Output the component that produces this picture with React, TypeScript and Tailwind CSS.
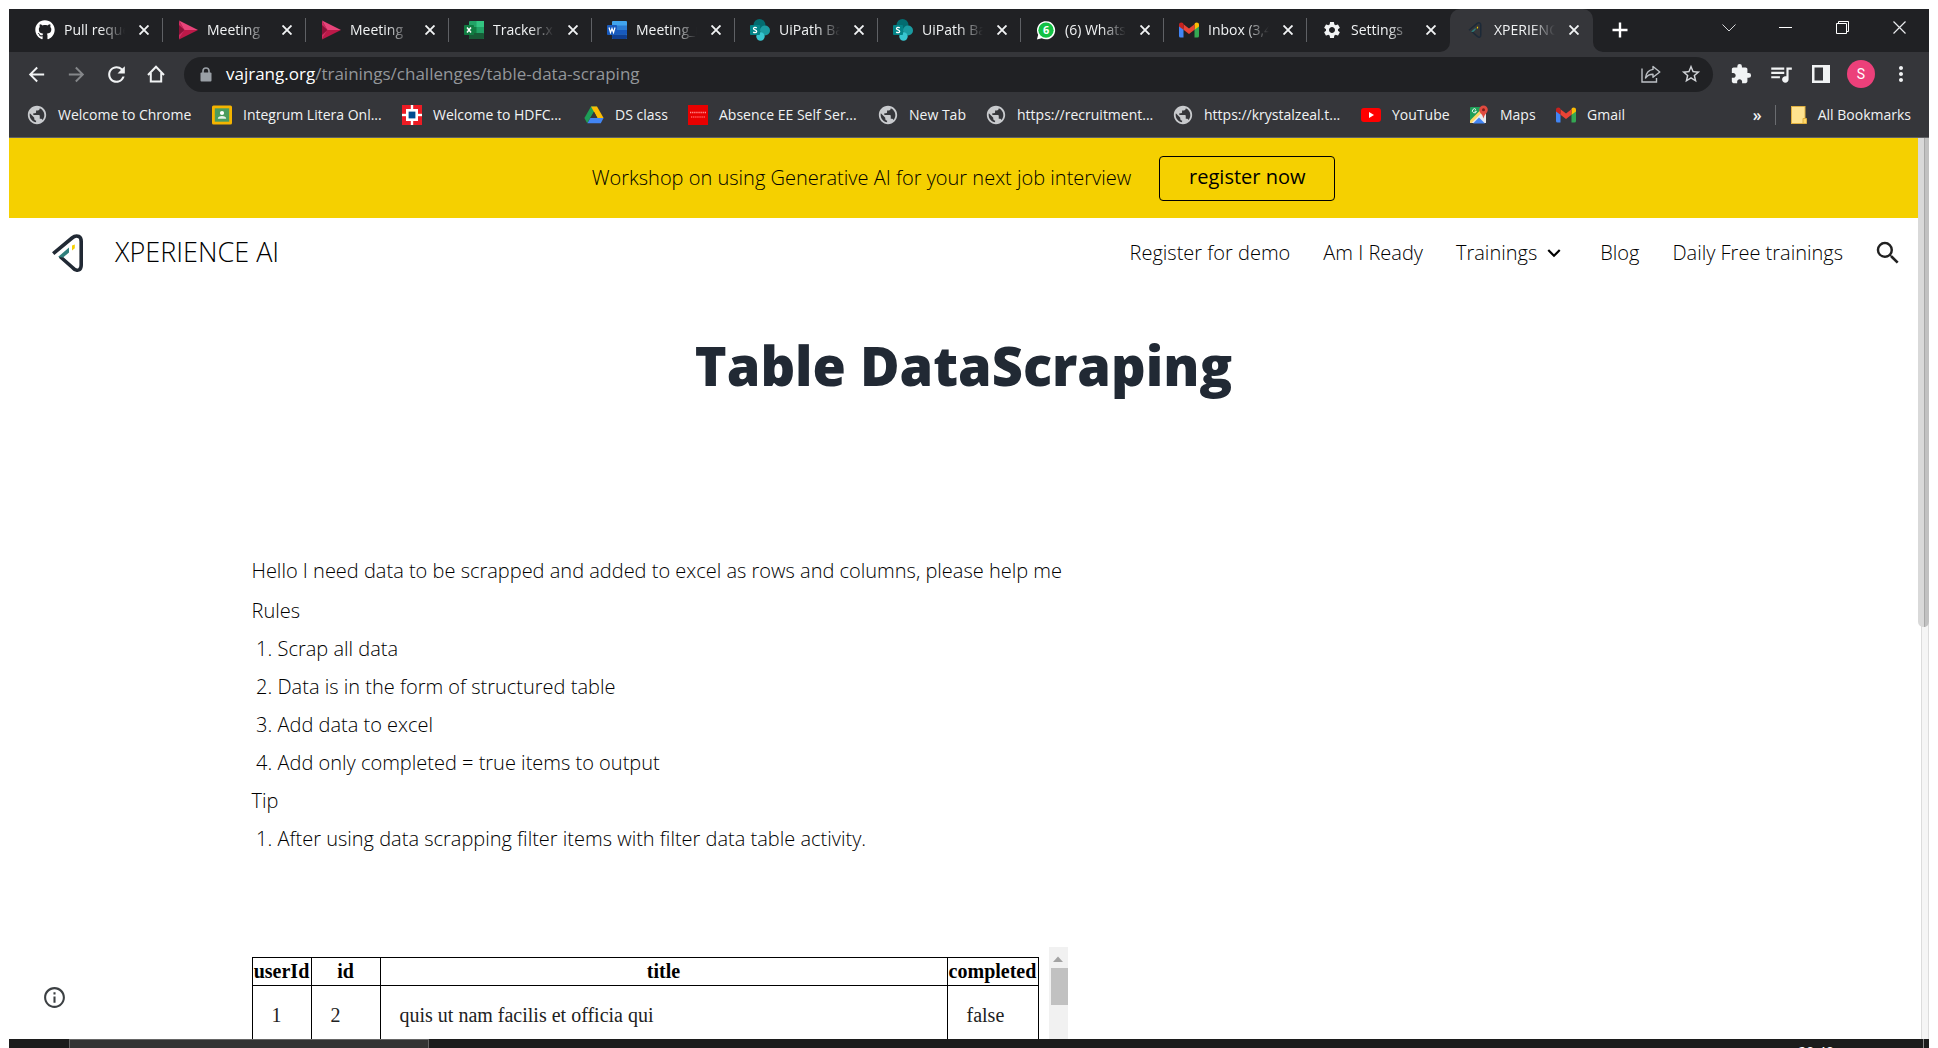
import React from "react";
import { FaGithub } from "react-icons/fa";
import {
  MdArrowBack,
  MdArrowForward,
  MdExpandMore,
  MdExtension,
  MdInfoOutline,
  MdMoreVert,
  MdPublic,
  MdQueueMusic,
  MdRefresh,
  MdSearch,
  MdSettings,
  MdStarBorder,
} from "react-icons/md";

const StreamIcon = () => (
  <svg viewBox="0 0 20 20" className="size-5">
    <path d="M1 0.5 L20 10 H6 Z" fill="#e8447a" />
    <path d="M6 10 H20 L1 19.5 Z" fill="#bc1948" />
    <path d="M1 0.5 L6.5 10 L1 19.5 Z" fill="#d02a60" />
    <path d="M1 5 L6.5 10 L1 15 Z" fill="#8a1137" />
  </svg>
);

const ExcelIcon = () => (
  <svg viewBox="0 0 20 20" className="size-5">
    <rect x="5" y="1" width="15" height="18" rx="1" fill="#21a366" />
    <rect x="12.5" y="1" width="7.5" height="6" fill="#33c481" />
    <rect x="5" y="7" width="7.5" height="6" fill="#107c41" />
    <rect x="5" y="13" width="15" height="6" rx="1" fill="#185c37" />
    <rect x="0" y="5" width="10" height="10" rx="1" fill="#107c41" />
    <path d="M3 7.5 L7 12.5 M7 7.5 L3 12.5" stroke="#fff" strokeWidth="1.5" />
  </svg>
);

const WordIcon = () => (
  <svg viewBox="0 0 20 20" className="size-5">
    <rect x="5" y="1" width="15" height="18" rx="1" fill="#41a5ee" />
    <rect x="5" y="5.5" width="15" height="4.5" fill="#2b7cd3" />
    <rect x="5" y="10" width="15" height="4.5" fill="#185abd" />
    <rect x="5" y="14.5" width="15" height="4.5" rx="1" fill="#103f91" />
    <rect x="0" y="5" width="10" height="10" rx="1" fill="#185abd" />
    <path d="M2 7.5 L3.5 12.5 L5 8.5 L6.5 12.5 L8 7.5" fill="none" stroke="#fff" strokeWidth="1.2" />
  </svg>
);

const SharePointIcon = () => (
  <svg viewBox="0 0 20 22" className="h-[22px] w-5">
    <circle cx="9.5" cy="6" r="6" fill="#036c70" />
    <circle cx="15" cy="11.5" r="5" fill="#1a9ba1" />
    <circle cx="10.5" cy="17.5" r="4.2" fill="#37c6d0" />
    <rect x="0" y="6" width="10" height="10" rx="1" fill="#038387" />
    <path
      d="M6.8 8.9 C5.5 8 3.4 8.3 3.5 9.7 C3.6 11.2 6.7 10.7 6.7 12.4 C6.6 13.9 4.3 13.9 3.2 13.1"
      fill="none"
      stroke="#fff"
      strokeWidth="1.3"
    />
  </svg>
);

const WhatsAppIcon = () => (
  <svg viewBox="0 0 22 22" className="size-[22px]">
    <path d="M1 21.5 L2.4 16.3 A10 10 0 1 1 6.3 20.1 Z" fill="#fff" />
    <circle cx="11" cy="11.2" r="8.4" fill="#12c144" />
    <text x="11" y="15.6" textAnchor="middle" fontSize="12" fontWeight="700" fontFamily="Open Sans" fill="#fff">
      6
    </text>
  </svg>
);

const GmailIcon = () => (
  <svg viewBox="0 0 20 16" className="h-4 w-5">
    <path d="M0 3 V14 Q0 15.5 1.5 15.5 H4.5 V6.5 Z" fill="#4285f4" />
    <path d="M20 3 V14 Q20 15.5 18.5 15.5 H15.5 V6.5 Z" fill="#34a853" />
    <path d="M15.5 2.2 V7.8 L20 4.4 V2.6 C20 0.4 17.5 -0.2 16 1 Z" fill="#fbbc04" />
    <path d="M4.5 7.8 V2.2 L10 6.4 L15.5 2.2 V7.8 L10 12 Z" fill="#ea4335" />
    <path d="M0 2.6 V4.4 L4.5 7.8 V2.2 L4 1 C2.5 -0.2 0 0.4 0 2.6 Z" fill="#c5221f" />
  </svg>
);

const Logo = ({ className, stroke }: { className: string; stroke: string }) => (
  <svg viewBox="0 0 31 38" className={className}>
    <path
      d="M1.2 19.6 L20 4 Q23.5 1 27 2.5 Q29.2 3.8 29.2 7.5 V31 Q29.2 35 26.8 35.9 Q23.6 37 21 34 L8 22.5"
      fill="none"
      stroke={stroke}
      strokeWidth="3.6"
    />
    <path d="M6 23 L17 13.5 V18.5 L11 23.6 Z" fill="#2f7f7c" />
    <path d="M20 11.6 L22.8 10.6 V14.2 L20 16.4 Z" fill="#f5d000" />
  </svg>
);

const ClassroomIcon = () => (
  <svg viewBox="0 0 20 20" className="size-5">
    <rect y="0.5" width="20" height="19" rx="1.5" fill="#f4b400" />
    <rect x="2.8" y="3.3" width="14.4" height="13.4" fill="#4a9c5d" />
    <circle cx="10" cy="8" r="2.1" fill="#fff" />
    <path d="M5.8 13.8 Q6 11 10 11 Q14 11 14.2 13.8 Z" fill="#e4f2e7" />
  </svg>
);

const HdfcIcon = () => (
  <svg viewBox="0 0 20 20" className="size-5">
    <rect width="20" height="20" fill="#ed1c24" />
    <rect x="4" y="4" width="12" height="12" fill="#fff" />
    <rect x="8.8" width="2.4" height="20" fill="#fff" />
    <rect y="8.8" width="20" height="2.4" fill="#fff" />
    <rect x="6.6" y="6.6" width="6.8" height="6.8" fill="#004c8f" />
  </svg>
);

const DriveIcon = () => (
  <svg viewBox="0 0 20 18" className="h-[18px] w-5">
    <path d="M7 0.5 H13 L10 5.8 L3.2 17.2 L0.4 12 Z" fill="#1e9e57" />
    <path d="M13 0.5 L19.6 12 H13.4 L7 0.5 Z" fill="#fbbc04" />
    <path d="M6.4 12 H19.6 L16.8 17.2 H3.4 Z" fill="#4285f4" />
    <path d="M10 5.8 L13.4 12 H6.4 Z" fill="#35363a" />
  </svg>
);

const OracleIcon = () => (
  <svg viewBox="0 0 20 20" className="size-5">
    <rect width="20" height="20" fill="#e80000" />
    <path d="M2 7.5 H18" stroke="#ff8f8f" strokeWidth="1.4" strokeDasharray="1.3 0.8" />
    <path d="M3 12 H17" stroke="#ff6060" strokeWidth="1.4" strokeDasharray="1.3 0.8" />
  </svg>
);

const YouTubeIcon = () => (
  <svg viewBox="0 0 20 14" className="h-3.5 w-5">
    <rect width="20" height="14" rx="3" fill="#f00" />
    <path d="M8 4 L13 7 L8 10 Z" fill="#fff" />
  </svg>
);

const MapsIcon = () => (
  <svg viewBox="0 0 20 20" className="size-5">
    <rect x="1" y="2" width="16" height="16" rx="1" fill="#1e9e57" />
    <path d="M1 18 L17 3 V18 Z" fill="#e8eaed" />
    <path d="M4 18.5 L10 12.5 L16 18.5 Z" fill="#4285f4" />
    <path d="M1 15.5 L12 4.5 L14 6.5 L2.5 18 H1 Z" fill="#fdd663" />
    <path d="M7 4.6 A2 2 0 1 0 7.4 6.2 H5.6" fill="none" stroke="#fff" strokeWidth="0.9" />
    <path
      d="M14.5 0.5 A4.3 4.3 0 0 1 18.8 4.8 C18.8 7.8 15.5 9 14.5 13.5 C13.5 9 10.2 7.8 10.2 4.8 A4.3 4.3 0 0 1 14.5 0.5 Z"
      fill="#e04a3f"
    />
    <circle cx="14.5" cy="4.8" r="1.5" fill="#7b1f1a" />
  </svg>
);

const FolderIcon = () => (
  <svg viewBox="0 0 16 18" className="h-[18px] w-4">
    <rect x="0.5" y="0.5" width="13.5" height="17" fill="#ffe38f" stroke="#e0b040" />
    <path d="M12 17.5 V12.5 H15.5 V17.5 Z" fill="#ffd766" stroke="#e0b040" />
  </svg>
);

const Globe = () => <MdPublic className="-mx-px size-[22px] shrink-0 text-[#c8cacd]" />;

const tabs = [
  { title: "Pull requests", icon: <FaGithub className="size-5 text-white" /> },
  { title: "Meeting", icon: <StreamIcon /> },
  { title: "Meeting", icon: <StreamIcon /> },
  { title: "Tracker.xlsx", icon: <ExcelIcon /> },
  { title: "Meeting_notes", icon: <WordIcon /> },
  { title: "UiPath Basics", icon: <SharePointIcon /> },
  { title: "UiPath Basics", icon: <SharePointIcon /> },
  { title: "(6) WhatsApp", icon: <WhatsAppIcon /> },
  { title: "Inbox (3,421)", icon: <GmailIcon /> },
  { title: "Settings", icon: <MdSettings className="size-[22px] text-[#f1f3f4]" /> },
  { title: "XPERIENCE AI", icon: <Logo className="h-4 w-3.5" stroke="#1d2a38" />, active: true },
];

const bookmarks = [
  { label: "Welcome to Chrome", icon: <Globe />, width: "w-[185px]" },
  { label: "Integrum Litera Onl...", icon: <ClassroomIcon />, width: "w-[190px]" },
  { label: "Welcome to HDFC...", icon: <HdfcIcon />, width: "w-[182px]" },
  { label: "DS class", icon: <DriveIcon />, width: "w-[104px]" },
  { label: "Absence EE Self Ser...", icon: <OracleIcon />, width: "w-[190px]" },
  { label: "New Tab", icon: <Globe />, width: "w-[108px]" },
  { label: "https://recruitment...", icon: <Globe />, width: "w-[187px]" },
  { label: "https://krystalzeal.t...", icon: <Globe />, width: "w-[188px]" },
  { label: "YouTube", icon: <YouTubeIcon />, width: "w-[108px]" },
  { label: "Maps", icon: <MapsIcon />, width: "w-[87px]" },
  { label: "Gmail", icon: <GmailIcon />, width: "w-[90px]" },
];

const rules = [
  "Scrap all data",
  "Data is in the form of structured table",
  "Add data to excel",
  "Add only completed = true items to output",
];

const rows = [{ userId: 1, id: 2, title: "quis ut nam facilis et officia qui", completed: "false" }];

function TabStrip() {
  return (
    <div className="flex h-[43px] shrink-0 bg-[#202124] pl-[11px] text-sm text-[#f1f3f4]">
      {tabs.map((tab, i) => (
        <div
          key={i}
          className={
            tab.active
              ? "relative flex w-[143px] items-center rounded-t-[10px] bg-[#35363a] pb-0.5 pl-[15px]"
              : "relative flex w-[143px] items-center pb-0.5 pl-[15px]"
          }
        >
          <span className="flex w-5 shrink-0 justify-center">{tab.icon}</span>
          <span className="ml-[9px] w-[61px] overflow-hidden whitespace-nowrap [mask-image:linear-gradient(to_right,black_60%,transparent)]">
            {tab.title}
          </span>
          <button type="button" aria-label="Close tab" className="ml-[9px] flex size-5 items-center justify-center">
            <svg viewBox="0 0 10 10" className="size-2.5">
              <path d="M0.5 0.5 L9.5 9.5 M9.5 0.5 L0.5 9.5" stroke="currentColor" strokeWidth="1.9" />
            </svg>
          </button>
          {i < 9 && <span className="absolute right-0 h-6 w-px bg-[#5f6165]" />}
          {tab.active && (
            <>
              <svg viewBox="0 0 10 10" className="absolute right-full bottom-0 size-2.5">
                <path d="M10 0 V10 H0 A10 10 0 0 0 10 0 Z" fill="#35363a" />
              </svg>
              <svg viewBox="0 0 10 10" className="absolute bottom-0 left-full size-2.5">
                <path d="M0 0 V10 H10 A10 10 0 0 1 0 0 Z" fill="#35363a" />
              </svg>
            </>
          )}
        </div>
      ))}
      <button type="button" aria-label="New tab" className="ml-[17px] flex w-5 items-center justify-center pb-0.5">
        <svg viewBox="0 0 16 16" className="size-4">
          <path d="M8 0.5 V15.5 M0.5 8 H15.5" stroke="#fff" strokeWidth="2.4" />
        </svg>
      </button>
      <div className="ml-auto flex h-[37px] pr-px">
        <button type="button" aria-label="Search tabs" className="flex w-[57px] items-center justify-center">
          <svg viewBox="0 0 14 8" className="h-2 w-3.5">
            <path d="M0.5 0.5 L7 7 L13.5 0.5" fill="none" stroke="#d6d7d9" />
          </svg>
        </button>
        <button type="button" aria-label="Minimize" className="flex w-[57px] items-center justify-center">
          <span className="h-px w-[13px] bg-white" />
        </button>
        <button type="button" aria-label="Restore" className="flex w-[57px] items-center justify-center">
          <svg viewBox="0 0 13 13" className="size-[13px]">
            <path d="M0.5 2.5 H10.5 V12.5 H0.5 Z M2.5 2.5 V0.5 H12.5 V10.5 H10.5" fill="none" stroke="#fff" />
          </svg>
        </button>
        <button type="button" aria-label="Close" className="flex w-[57px] items-center justify-center">
          <svg viewBox="0 0 13 13" className="size-[13px]">
            <path d="M0.5 0.5 L12.5 12.5 M12.5 0.5 L0.5 12.5" stroke="#e8eaed" strokeWidth="1.2" />
          </svg>
        </button>
      </div>
    </div>
  );
}

const navButton = "flex w-10 items-center justify-center";

function Toolbar() {
  return (
    <div className="flex h-[43px] shrink-0 items-center bg-[#35363a] pt-px pr-2 pl-[7px] text-[#f1f3f4]">
      <button type="button" aria-label="Back" className={navButton}>
        <MdArrowBack className="size-[23px]" />
      </button>
      <button type="button" aria-label="Forward" className={navButton}>
        <MdArrowForward className="size-[23px] text-[#85878a]" />
      </button>
      <button type="button" aria-label="Reload" className={navButton}>
        <MdRefresh className="size-[25px]" />
      </button>
      <button type="button" aria-label="Home" className={navButton}>
        <svg viewBox="0 0 18 18" className="size-[18px]">
          <path d="M1 10 L9 1.8 L17 10 M3.8 8 V16.5 H14.2 V8" fill="none" stroke="currentColor" strokeWidth="2" />
        </svg>
      </button>
      <div className="ml-2 flex h-[35px] flex-1 items-center rounded-full bg-[#202124] pr-0.5 pl-4 text-[17px]">
        <svg viewBox="0 0 12 15" className="h-[15px] w-3">
          <rect x="0.5" y="5.5" width="11" height="9" rx="1" fill="#9aa0a6" />
          <path d="M3 6 V4 A3 3 0 0 1 9 4 V6" fill="none" stroke="#9aa0a6" strokeWidth="1.6" />
        </svg>
        <label htmlFor="address" className="ml-[14px] whitespace-nowrap text-white">
          vajrang.org
        </label>
        <input
          id="address"
          type="text"
          defaultValue="/trainings/challenges/table-data-scraping"
          className="min-w-0 flex-1 bg-transparent text-[#93969a] outline-none"
        />
        <button type="button" aria-label="Share" className="flex w-10 items-center justify-center text-[#bdc1c6]">
          <svg viewBox="0 0 20 18" className="h-[18px] w-5">
            <path d="M1 3.5 V17 H15.5 V13" fill="none" stroke="currentColor" strokeWidth="1.4" />
            <path
              d="M12 1.5 L18.8 7 L12 12.2 V9.3 C8.5 9.3 6.2 10.6 4.5 13 C5 8.6 7.6 5 12 4.4 Z"
              fill="none"
              stroke="currentColor"
              strokeWidth="1.4"
              strokeLinejoin="round"
            />
          </svg>
        </button>
        <button type="button" aria-label="Bookmark" className="flex w-10 items-center justify-center text-[#d0d3d7]">
          <MdStarBorder className="size-[22px]" />
        </button>
      </div>
      <div className="ml-2 flex">
        <button type="button" aria-label="Extensions" className={navButton}>
          <MdExtension className="size-[22px]" />
        </button>
        <button type="button" aria-label="Media" className={navButton}>
          <MdQueueMusic className="size-[26px]" />
        </button>
        <button type="button" aria-label="Side panel" className={navButton}>
          <svg viewBox="0 0 18 18" className="size-[18px]">
            <path d="M0 0 H18 V18 H0 Z M2.5 2.5 V15.5 H11 V2.5 Z" fill="currentColor" fillRule="evenodd" />
          </svg>
        </button>
        <button type="button" aria-label="Profile" className={navButton}>
          <span className="flex size-7 items-center justify-center rounded-full bg-[#ec407a] font-['Roboto',sans-serif] text-sm text-white">
            S
          </span>
        </button>
        <button type="button" aria-label="Menu" className={navButton}>
          <MdMoreVert className="size-6" />
        </button>
      </div>
    </div>
  );
}

function BookmarksBar() {
  return (
    <div className="flex h-[43px] shrink-0 items-center border-b border-[#5f6165] bg-[#35363a] pr-[18px] pb-0.5 pl-[18px] text-sm text-[#f1f3f4]">
      {bookmarks.map((b) => (
        <a key={b.label} href="#" className={`flex shrink-0 items-center whitespace-nowrap ${b.width}`}>
          <span className="flex w-5 shrink-0 justify-center">{b.icon}</span>
          <span className="ml-[11px]">{b.label}</span>
        </a>
      ))}
      <button type="button" aria-label="More bookmarks" className="ml-auto text-base font-semibold">
        »
      </button>
      <span className="ml-[13px] h-5 w-px bg-[#6a6c70]" />
      <a href="#" className="ml-[15px] flex items-center whitespace-nowrap">
        <FolderIcon />
        <span className="ml-[11px]">All Bookmarks</span>
      </a>
    </div>
  );
}

function SiteHeader() {
  return (
    <>
      <div className="flex h-20 items-center justify-center text-[20px] bg-[#f5d000] text-black">
        <span className="font-light">Workshop on using Generative AI for your next job interview</span>
        <a
          href="#"
          className="ml-7 flex h-[45px] w-[176px] items-center justify-center rounded border border-black pb-0.5"
        >
          register now
        </a>
      </div>
      <header className="flex h-[70px] items-center pr-[15px] pl-[43px] text-[20px] font-light text-black">
        <Logo className="h-[38px] w-[31px]" stroke="#212934" />
        <a href="#" className="ml-8 pb-0.5 text-[27px]">
          XPERIENCE AI
        </a>
        <nav className="ml-auto flex items-center gap-[33px]">
          <a href="#">Register for demo</a>
          <a href="#">Am I Ready</a>
          <button type="button" className="flex items-center gap-1">
            Trainings <MdExpandMore className="size-[26px]" />
          </button>
          <a href="#">Blog</a>
          <a href="#">Daily Free trainings</a>
        </nav>
        <button type="button" aria-label="Search" className="ml-[30px]">
          <MdSearch className="size-[30px] text-[#212121]" />
        </button>
      </header>
    </>
  );
}

function DataTable() {
  return (
    <div className="mt-[93px] flex h-[200px] w-[816px] font-['Liberation_Serif',serif] text-[20px] leading-[23px] text-black">
      <div className="flex-1 pt-[10px]">
        <table className="w-[787px] table-fixed border-collapse">
          <colgroup>
            <col className="w-[59px]" />
            <col className="w-[69px]" />
            <col />
            <col className="w-[91px]" />
          </colgroup>
          <thead>
            <tr>
              {["userId", "id", "title", "completed"].map((h) => (
                <th key={h} className="border border-black py-[2px] font-bold">
                  {h}
                </th>
              ))}
            </tr>
          </thead>
          <tbody>
            {rows.map((r) => (
              <tr key={r.id}>
                {[r.userId, r.id, r.title, r.completed].map((v, i) => (
                  <td key={i} className="border border-black px-[19px] py-[18px] text-[#212121]">
                    {v}
                  </td>
                ))}
              </tr>
            ))}
          </tbody>
        </table>
      </div>
      <div className="flex w-[19px] flex-col items-end bg-[#f1f1f1]">
        <div className="flex h-[21px] w-full items-center justify-center pt-0.5">
          <svg viewBox="0 0 10 6" className="h-1.5 w-2.5">
            <path d="M0 6 L5 0.5 L10 6 Z" fill="#a3a3a3" />
          </svg>
        </div>
        <div className="h-[37px] w-[17px] bg-[#c1c1c1]" />
      </div>
    </div>
  );
}

export default function App() {
  return (
    <div className="flex h-screen flex-col overflow-hidden bg-white px-[9px] pt-[9px] font-['Open_Sans',sans-serif]">
      <TabStrip />
      <Toolbar />
      <BookmarksBar />
      <div className="relative flex min-h-0 flex-1">
        <div className="min-w-0 flex-1 overflow-hidden">
          <SiteHeader />
          <main>
            <h1 className="mt-[37px] text-center text-[54px] leading-[80px] font-extrabold text-[#212934]">
              Table DataScraping
            </h1>
            <div className="mx-auto mt-[151px] max-w-[1424px] text-[20px] leading-[30px] font-light text-black">
              <p>Hello I need data to be scrapped and added to excel as rows and columns, please help me</p>
              <p className="mt-[10px]">Rules</p>
              <ol className="list-decimal pl-[26px]">
                {rules.map((r) => (
                  <li key={r} className="mt-2">
                    {r}
                  </li>
                ))}
              </ol>
              <p className="mt-2">Tip</p>
              <ol className="list-decimal pl-[26px]">
                <li className="mt-2">After using data scrapping filter items with filter data table activity.</li>
              </ol>
              <DataTable />
            </div>
          </main>
        </div>
        <div className="flex w-[11px] justify-end">
          <div className="w-2 border-x border-[#dcdcdc] bg-[#f5f5f5]" />
        </div>
        <div className="absolute top-0 right-0 flex h-[489px] w-[11px] overflow-hidden rounded-b-[6px] bg-[#d9d9d9]">
          <div className="ml-auto w-[5px] border-l border-[#a8a8a8] bg-[#c1c1c1]" />
        </div>
        <button type="button" aria-label="Site information" className="absolute bottom-[29px] left-[33px]">
          <MdInfoOutline className="size-[25px] text-[#3c4043]" />
        </button>
      </div>
      <div className="flex h-[9px] shrink-0 overflow-hidden bg-[#1c1c1c]">
        <div className="ml-[60px] h-10 w-[360px] border border-[#666] bg-[#333]" />
        <span className="ml-auto text-sm leading-[26px] text-white">20:40</span>
        <span className="mr-[5px] ml-[89px] h-full w-px bg-[#8a8a8a]" />
      </div>
    </div>
  );
}
